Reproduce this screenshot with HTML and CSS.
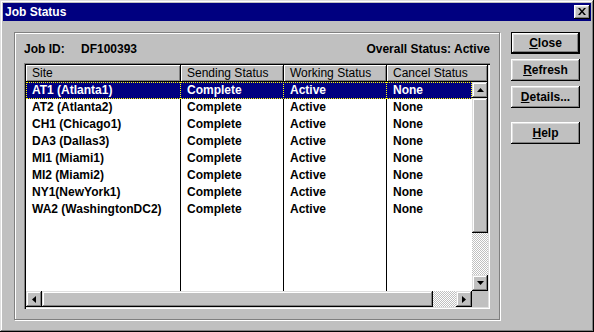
FILE: index.html
```html
<!DOCTYPE html>
<html>
<head>
<meta charset="utf-8">
<link rel="stylesheet" href="styles.css">
</head>
<body>
<div class="window">
  <div class="titlebar">
    <span class="title">Job Status</span>
    <span class="tb-close"><svg width="8" height="7" viewBox="0 0 8 7"><path d="M0 0h2l2 2.5L6 0h2L5 3.5 8 7H6L4 4.5 2 7H0l3-3.5z" fill="#000"/></svg></span>
  </div>
  <div class="body">
    <div class="group">
      <div class="info">
        <span class="label">Job ID:</span><span class="jobid">DF100393</span>
        <span class="overall">Overall Status: Active</span>
      </div>
      <div class="list">
        <div class="header">
          <div class="hcell">Site</div>
          <div class="hcell">Sending Status</div>
          <div class="hcell">Working Status</div>
          <div class="hcell">Cancel Status</div>
        </div>
        <div class="main">
          <div class="rowsarea">
            <div class="rows">
              <div class="row selected"><div class="cell">AT1 (Atlanta1)</div><div class="cell">Complete</div><div class="cell">Active</div><div class="cell">None</div></div>
              <div class="row"><div class="cell">AT2 (Atlanta2)</div><div class="cell">Complete</div><div class="cell">Active</div><div class="cell">None</div></div>
              <div class="row"><div class="cell">CH1 (Chicago1)</div><div class="cell">Complete</div><div class="cell">Active</div><div class="cell">None</div></div>
              <div class="row"><div class="cell">DA3 (Dallas3)</div><div class="cell">Complete</div><div class="cell">Active</div><div class="cell">None</div></div>
              <div class="row"><div class="cell">MI1 (Miami1)</div><div class="cell">Complete</div><div class="cell">Active</div><div class="cell">None</div></div>
              <div class="row"><div class="cell">MI2 (Miami2)</div><div class="cell">Complete</div><div class="cell">Active</div><div class="cell">None</div></div>
              <div class="row"><div class="cell">NY1(NewYork1)</div><div class="cell">Complete</div><div class="cell">Active</div><div class="cell">None</div></div>
              <div class="row"><div class="cell">WA2 (WashingtonDC2)</div><div class="cell">Complete</div><div class="cell">Active</div><div class="cell">None</div></div>
              <div class="row filler"><div class="cell"></div><div class="cell"></div><div class="cell"></div><div class="cell"></div></div>
            </div>
            <div class="vscroll">
              <div class="sbtn"><svg width="7" height="4" viewBox="0 0 7 4"><path d="M3.5 0L7 4H0z" fill="#000"/></svg></div>
              <div class="vthumb"></div>
              <div class="track"></div>
              <div class="sbtn"><svg width="7" height="4" viewBox="0 0 7 4"><path d="M0 0h7L3.5 4z" fill="#000"/></svg></div>
            </div>
          </div>
          <div class="hrow">
            <div class="hscroll">
              <div class="sbtn"><svg width="4" height="7" viewBox="0 0 4 7"><path d="M0 3.5L4 0v7z" fill="#000"/></svg></div>
              <div class="hthumb"></div>
              <div class="track"></div>
              <div class="sbtn"><svg width="4" height="7" viewBox="0 0 4 7"><path d="M0 0l4 3.5L0 7z" fill="#000"/></svg></div>
            </div>
            <div class="corner"></div>
          </div>
        </div>
      </div>
    </div>
    <div class="buttons">
      <div class="btn default"><span><u>C</u>lose</span></div>
      <div class="btn"><span><u>R</u>efresh</span></div>
      <div class="btn"><span><u>D</u>etails...</span></div>
      <div class="btn help"><span><u>H</u>elp</span></div>
    </div>
  </div>
</div>
</body>
</html>
```
FILE: styles.css
```css
body {
  margin: 0;
  font-family: "Liberation Sans", Arial, sans-serif;
  font-size: 12px;
  background: #c0c0c0;
}
.window {
  width: 594px;
  height: 332px;
  box-sizing: border-box;
  background: #c0c0c0;
  padding: 3px;
  box-shadow: inset -1px -1px #000, inset 1px 1px #dfdfdf, inset -2px -2px #808080, inset 2px 2px #fff;
  display: flex;
  flex-direction: column;
}
.titlebar {
  height: 18px;
  flex: none;
  background: #000080;
  color: #fff;
  font-weight: bold;
  display: flex;
  align-items: center;
  justify-content: space-between;
  padding: 0 1px 0 2px;
}
.title { line-height: 18px; }
.tb-close {
  width: 16px;
  height: 14px;
  box-sizing: border-box;
  background: #c0c0c0;
  box-shadow: inset -1px -1px #000, inset 1px 1px #fff, inset -2px -2px #808080, inset 2px 2px #dfdfdf;
  display: flex;
  align-items: center;
  justify-content: center;
  padding-bottom: 1px;
}
.tb-close svg { display: block; }
.body {
  flex: 1;
  display: flex;
  padding: 11px 0 0 11px;
}
.group {
  width: 486px;
  height: 288px;
  box-sizing: border-box;
  border: 1px solid #808080;
  box-shadow: inset 1px 1px #fff, 1px 1px #fff;
  padding: 8px 9px 0 9px;
  display: flex;
  flex-direction: column;
}
.info {
  height: 16px;
  line-height: 16px;
  font-weight: bold;
  display: flex;
  margin-bottom: 6px;
}
.label { width: 57px; }
.overall { margin-left: auto; }
.list {
  width: 466px;
  height: 246px;
  box-sizing: border-box;
  padding: 2px;
  background: #fff;
  box-shadow: inset 1px 1px #808080, inset 2px 2px #000, inset -1px -1px #fff, inset -2px -2px #dfdfdf;
  display: flex;
  flex-direction: column;
}
.header {
  height: 17px;
  flex: none;
  display: grid;
  grid-template-columns: 155px 103px 103px 101px;
}
.hcell {
  background: #c0c0c0;
  box-shadow: inset -1px -1px #000, inset 1px 1px #fff, inset -2px -2px #808080;
  padding-left: 6px;
  line-height: 17px;
  white-space: nowrap;
  overflow: hidden;
}
.main {
  flex: 1;
  display: flex;
  flex-direction: column;
}
.rowsarea {
  flex: 1;
  display: flex;
}
.rows {
  width: 446px;
  display: flex;
  flex-direction: column;
}
.row {
  height: 17px;
  flex: none;
  display: grid;
  grid-template-columns: 155px 103px 103px 85px;
  font-weight: bold;
  line-height: 16px;
  box-sizing: border-box;
}
.cell {
  padding-left: 6px;
  border-right: 1px solid #000;
  white-space: nowrap;
  overflow: hidden;
}
.row .cell:last-child { border-right: none; }
.row.filler { flex: 1; }
.row.selected {
  background: #000080;
  color: #fff;
  outline: 1px dotted #ffff00;
  outline-offset: -1px;
}
.row.selected .cell { border-right: 1px dotted #ffff00; }
.row.selected .cell:last-child { border-right: none; }
.vscroll {
  width: 16px;
  display: flex;
  flex-direction: column;
}
.sbtn {
  width: 16px;
  height: 16px;
  flex: none;
  box-sizing: border-box;
  background: #c0c0c0;
  box-shadow: inset -1px -1px #000, inset 1px 1px #dfdfdf, inset -2px -2px #808080, inset 2px 2px #fff;
  display: flex;
  align-items: center;
  justify-content: center;
}
.sbtn svg { display: block; }
.vthumb {
  height: 135px;
  flex: none;
  background: #c0c0c0;
  box-shadow: inset -1px -1px #000, inset 1px 1px #dfdfdf, inset -2px -2px #808080, inset 2px 2px #fff;
}
.track {
  flex: 1;
  background: repeating-conic-gradient(#c0c0c0 0 25%, #fff 0 50%) 0 0 / 2px 2px;
}
.hrow {
  height: 16px;
  flex: none;
  display: flex;
}
.hscroll {
  width: 446px;
  display: flex;
}
.hthumb {
  width: 391px;
  flex: none;
  background: #c0c0c0;
  box-shadow: inset -1px -1px #000, inset 1px 1px #dfdfdf, inset -2px -2px #808080, inset 2px 2px #fff;
}
.corner {
  width: 16px;
  background: #c0c0c0;
}
.buttons {
  margin-left: 11px;
  display: flex;
  flex-direction: column;
  gap: 5px;
}
.btn {
  width: 69px;
  height: 22px;
  box-sizing: border-box;
  background: #c0c0c0;
  box-shadow: inset -1px -1px #000, inset 1px 1px #fff, inset -2px -2px #808080, inset 2px 2px #dfdfdf;
  font-weight: bold;
  display: flex;
  align-items: center;
  justify-content: center;
}
.btn.default {
  border: 1px solid #000;
  box-shadow: inset -1px -1px #000, inset 1px 1px #fff, inset -2px -2px #808080, inset 2px 2px #dfdfdf;
}
.btn.help { margin-top: 9px; }
```
